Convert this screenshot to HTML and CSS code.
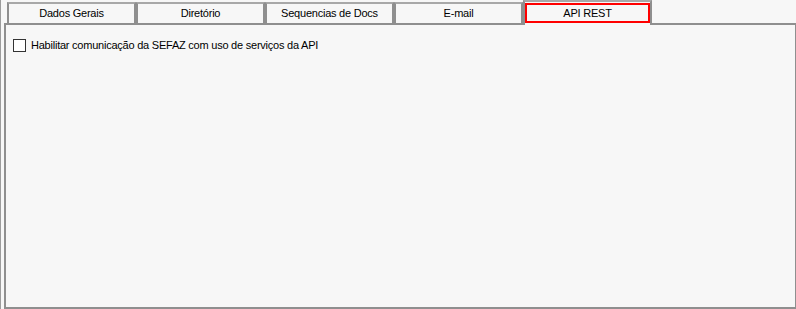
FILE: index.html
```html
<!DOCTYPE html>
<html lang="pt">
<head>
<meta charset="utf-8">
<title>API REST</title>
<link rel="stylesheet" href="styles.css">
</head>
<body>
<div class="frame">
  <div class="tabs">
    <div class="tab">Dados Gerais</div>
    <div class="tab">Diretório</div>
    <div class="tab">Sequencias de Docs</div>
    <div class="tab">E-mail</div>
    <div class="tab active"><span class="focus">API REST</span></div>
  </div>
  <div class="panel">
    <label class="check">
      <span class="box"></span>
      <span class="label">Habilitar comunicação da SEFAZ com uso de serviços da API</span>
    </label>
  </div>
</div>
</body>
</html>
```
FILE: styles.css
```css
html, body {
  margin: 0;
  padding: 0;
  background: #f7f7f7;
}
body {
  width: 796px;
  height: 309px;
  overflow: hidden;
  font-family: "Liberation Sans", Arial, sans-serif;
  font-size: 11px;
  letter-spacing: -0.23px;
  color: #000;
}
.frame {
  box-sizing: border-box;
  height: 309px;
  border-left: 1px solid #9c9c9c;
  padding-left: 3px;
  display: flex;
  flex-direction: column;
}
.tabs {
  display: flex;
  align-items: flex-end;
  height: 23px;
  padding-left: 3px;
  position: relative;
  z-index: 1;
}
.tab {
  box-sizing: border-box;
  width: 129px;
  height: 21px;
  border: 2px solid #8f8f8f;
  border-bottom: none;
  border-top-color: #a8a8a8;
  background: #f7f7f7;
  display: flex;
  align-items: center;
  justify-content: center;
  padding-bottom: 1px;
}
.tab.active {
  height: 25px;
  margin-bottom: -2px;
  padding: 2px 0 2px 0;
  align-items: stretch;
}
.focus {
  flex: 1;
  box-sizing: border-box;
  border: 2px solid #ff0000;
  display: flex;
  align-items: center;
  justify-content: center;
  margin-top: -1px;
}
.panel {
  flex: 1;
  box-sizing: border-box;
  border: 2px solid #8f8f8f;
  border-right-width: 1px;
  padding: 14px 7px;
}
.check {
  display: flex;
  align-items: center;
  gap: 5px;
}
.box {
  box-sizing: border-box;
  width: 13px;
  height: 13px;
  border: 1px solid #333;
  background: #fff;
}
.label {
  line-height: 13px;
}
```
